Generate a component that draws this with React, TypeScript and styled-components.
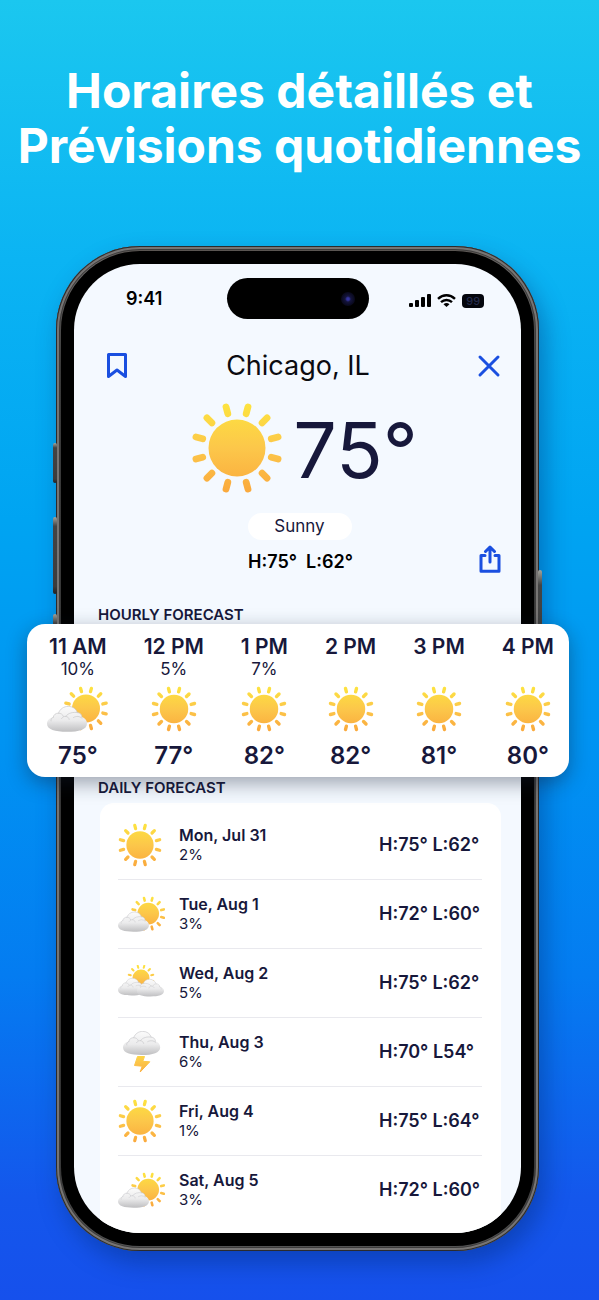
import React, { useId } from "react";
import styled, { createGlobalStyle } from "styled-components";

const navy = "#17183b";
const blue = "#1a4fe0";

const GlobalStyle = createGlobalStyle`
  * { box-sizing: border-box; }
  html, body { margin: 0; min-height: 100%; }
  body {
    background: #1553ec;
    font-family: Inter, "Liberation Sans", sans-serif;
    color: ${navy};
  }
  h1, h2, h3, p, ul, ol { margin: 0; padding: 0; }
  ul, ol { list-style: none; }
`;

const Page = styled.main`
  min-height: 100vh;
  padding: 63px 0 50px;
  background: linear-gradient(180deg, #1bc7ef 0%, #0bb4f3 20%, #00a4f2 40%, #0092f2 58%, #047cf1 75%, #1457ec 92%, #1650ec 100%);
`;

const Headline = styled.h1`
  color: #fff;
  font-size: 48px;
  line-height: 55px;
  font-weight: 700;
  text-align: center;
  white-space: nowrap;
  display: flex;
  flex-direction: column;
  align-items: center;
  margin-bottom: 73px;
`;

const Phone = styled.section`
  position: relative;
  margin: 0 60px 0 56px;
  padding: 5px;
  border-radius: 84px;
  background: linear-gradient(180deg, #55504c, #6b6867 2%, #3a3a3a 12%, #333 90%, #555 100%);
  box-shadow: inset 0 0 0 1px #2b2b2c, inset 0 0 0 3px #777574, inset 0 0 0 4px #3d3c3c,
    6px 12px 24px rgba(0, 40, 110, 0.4);
`;

const SideKey = styled.span<{ $side: "left" | "right"; $top: number; $length: number }>`
  position: absolute;
  ${(p) => p.$side}: -3px;
  top: ${(p) => p.$top}px;
  width: 4px;
  height: ${(p) => p.$length}px;
  border-radius: 2px;
  background: linear-gradient(180deg, #a3a39c, #444 12%, #3c3c3c 90%, #222);
`;

const Bezel = styled.div`
  padding: 13px;
  border-radius: 79px;
  background: #000;
`;

const Screen = styled.div`
  border-radius: 66px;
  background: #f4f9ff;
`;

const StatusBar = styled.div`
  display: grid;
  grid-template-columns: 1fr 142px 1fr;
  align-items: center;
  padding-top: 14px;
  color: #000;
`;

const Clock = styled.time`
  padding-right: 12px;
  font-size: 18px;
  line-height: 20px;
  font-weight: 600;
  text-align: center;
`;

const Island = styled.div`
  display: flex;
  align-items: center;
  justify-content: flex-end;
  height: 41px;
  padding-right: 14px;
  border-radius: 21px;
  background: #000;
`;

const Lens = styled.span`
  width: 14px;
  height: 14px;
  border-radius: 50%;
  background: radial-gradient(circle, #3535a0 0 12%, #14143c 30%, #0b0b22 60%, #040408 100%);
`;

const Indicators = styled.div`
  display: flex;
  align-items: center;
  justify-content: center;
  gap: 6px;
  padding: 4px 0 0 4px;
`;

const Battery = styled.span`
  width: 22px;
  height: 14px;
  border-radius: 4px;
  background: #04060d;
  color: #252c4c;
  font-size: 11px;
  line-height: 14px;
  font-weight: 500;
  text-align: center;
`;

const TitleBar = styled.header`
  display: flex;
  align-items: center;
  justify-content: space-between;
  margin-top: 25px;
  padding: 0 20px 0 33px;
`;

const IconButton = styled.button`
  display: flex;
  padding: 0;
  border: 0;
  background: none;
  color: ${blue};
  cursor: pointer;
`;

const City = styled.h2`
  padding-right: 8px;
  color: #0b0b10;
  font-size: 27px;
  line-height: 44px;
  font-weight: 400;
`;

const Summary = styled.div`
  display: flex;
  flex-direction: column;
  align-items: center;
  gap: 19px;
  padding: 14px 0 0 4px;
`;

const Now = styled.div`
  display: flex;
  align-items: center;
  gap: 10px;
  height: 92px;
  padding-left: 10px;
`;

const NowTemp = styled.p`
  padding-top: 4px;
  font-size: 77px;
  line-height: 92px;
  font-weight: 400;
`;

const Condition = styled.p`
  width: 104px;
  border-radius: 14px;
  background: #fff;
  font-size: 17px;
  line-height: 27px;
  text-align: center;
`;

const RangeRow = styled.div`
  display: grid;
  grid-template-columns: 1fr auto 1fr;
  align-items: center;
  height: 44px;
  margin-bottom: 22px;
  padding: 0 20px;
`;

const TodayRange = styled.p`
  grid-column: 2;
  padding-left: 6px;
  color: #000;
  font-size: 18px;
  line-height: 22px;
  font-weight: 600;
  white-space: pre;
`;

const ShareButton = styled(IconButton)`
  justify-self: end;
  margin-bottom: 6px;
`;

const SectionTitle = styled.h3`
  padding: 0 24px;
  font-size: 15px;
  line-height: 18px;
  font-weight: 600;
`;

const HourlyCard = styled.ol`
  position: relative;
  display: flex;
  justify-content: space-between;
  height: 153px;
  margin: 0 -48px 0 -47px;
  padding: 12px 15px 0 22px;
  border-radius: 18px;
  background: #fff;
  box-shadow: 0 6px 20px rgba(20, 30, 50, 0.4);
`;

const Hour = styled.li`
  display: flex;
  flex-direction: column;
  align-items: center;
`;

const HourName = styled.time`
  font-size: 21px;
  line-height: 22px;
  font-weight: 600;
  white-space: nowrap;
`;

const HourChance = styled.span`
  height: 22px;
  font-size: 17px;
  line-height: 22px;
`;

const HourIcon = styled.span`
  display: flex;
  margin: 6px -6px 10px;
`;

const HourTemp = styled.strong`
  font-size: 24px;
  line-height: 28px;
  font-weight: 600;
`;

const Daily = styled.div`
  overflow: hidden;
  padding-top: 2px;
  border-radius: 0 0 66px 66px;
`;

const DailyPanel = styled.ul`
  margin: 6px 20px 0 26px;
  padding: 7px 19px 9px 18px;
  border-radius: 14px 14px 0 0;
  background: #fff;
`;

const Day = styled.li`
  display: grid;
  grid-template-columns: 61px 1fr 103px;
  align-items: center;
  height: 69px;
  & + & { border-top: 1px solid #e9e9ee; }
`;

const DayName = styled.strong`
  display: block;
  font-size: 16px;
  line-height: 20px;
  font-weight: 600;
`;

const DayChance = styled.span`
  display: block;
  font-size: 15px;
  line-height: 20px;
`;

const DayRange = styled.span`
  font-size: 18px;
  line-height: 22px;
  font-weight: 600;
  white-space: nowrap;
`;

function SunShape({ cx, cy, r, paint }: { cx: number; cy: number; r: number; paint: string }) {
  const unit = r / 28.5;
  return (
    <g stroke={paint} fill={paint}>
      <circle cx={cx} cy={cy} r={r} stroke="none" />
      {Array.from({ length: 12 }, (_, i) => {
        const a = ((i * 30 + 15) * Math.PI) / 180;
        return (
          <line
            key={i}
            x1={cx + Math.cos(a) * 35.5 * unit}
            y1={cy + Math.sin(a) * 35.5 * unit}
            x2={cx + Math.cos(a) * 42.5 * unit}
            y2={cy + Math.sin(a) * 42.5 * unit}
            strokeWidth={6.8 * unit}
            strokeLinecap="round"
          />
        );
      })}
    </g>
  );
}

function SunPaint({ id, top, bottom }: { id: string; top: number; bottom: number }) {
  return (
    <linearGradient id={id} gradientUnits="userSpaceOnUse" x1="0" y1={top} x2="0" y2={bottom}>
      <stop offset="0" stopColor="#fde43f" />
      <stop offset="0.5" stopColor="#fcc74a" />
      <stop offset="1" stopColor="#faa83c" />
    </linearGradient>
  );
}

function Cloud({ paint }: { paint: string }) {
  return (
    <g>
      <path
        d="M20 25.800C8 25.800 0 23.500 0 17.800C0 14.400 2.600 12 6.200 11.300C6.600 8.500 9 7 11.500 7.200C13 2.800 17 .4 21.200 .4C25.800 .4 29.300 3 30.300 6.600C33 6.700 34.800 8.500 35 11C38 12 40 14.400 40 17.400C40 23.500 32 25.800 20 25.800Z"
        fill={paint}
      />
      <path
        d="M6.200 11.300C6.600 8.500 9 7 11.500 7.200C13 2.800 17 .4 21.200 .4C25.800 .4 29.300 3 30.300 6.600C33 6.700 34.800 8.500 35 11M6.200 11.300C4.500 12 3.600 13.400 4 15M11.500 7.200C14 7.200 15.800 8.400 16.400 10.400M14.500 12.600C15.800 10.800 17.300 10.200 19 10.400C20.500 7.200 26.500 5.700 30.300 6.600M26.500 11.500C29.300 9.800 32.600 10.100 35 12.200M19 10.400C21 10.800 22 12 22.200 13.400"
        fill="none"
        stroke="#c8c8ca"
        strokeWidth="0.700"
        strokeLinecap="round"
      />
    </g>
  );
}

function CloudPaint({ id }: { id: string }) {
  return (
    <linearGradient id={id} x1="0" y1="0" x2="0" y2="1">
      <stop offset="0" stopColor="#fbfbfb" />
      <stop offset="0.55" stopColor="#ebebec" />
      <stop offset="1" stopColor="#bfbfc1" />
    </linearGradient>
  );
}

function SunIcon({ size }: { size: number }) {
  const id = useId();
  return (
    <svg width={size} height={size} viewBox="0 0 92 92" role="img" aria-label="Sunny">
      <defs><SunPaint id={id} top={0} bottom={92} /></defs>
      <SunShape cx={46} cy={46} r={28.5} paint={`url(#${id})`} />
    </svg>
  );
}

function PartlyIcon({ width }: { width: number }) {
  const id = useId();
  return (
    <svg width={width} height={Math.round((width * 46) / 62)} viewBox="0 0 62 46" role="img" aria-label="Partly cloudy">
      <defs>
        <SunPaint id={`${id}s`} top={0} bottom={44} />
        <CloudPaint id={`${id}c`} />
      </defs>
      <SunShape cx={39} cy={22.5} r={14} paint={`url(#${id}s)`} />
      <g transform="translate(0 20)"><Cloud paint={`url(#${id}c)`} /></g>
    </svg>
  );
}

function MostlyCloudyIcon() {
  const id = useId();
  return (
    <svg width="46" height="36" viewBox="0 0 46 36" role="img" aria-label="Mostly cloudy">
      <defs>
        <SunPaint id={`${id}s`} top={0} bottom={24} />
        <CloudPaint id={`${id}c`} />
      </defs>
      <SunShape cx={23} cy={13} r={8.5} paint={`url(#${id}s)`} />
      <g transform="translate(0 13) scale(.68)"><Cloud paint={`url(#${id}c)`} /></g>
      <g transform="translate(46 14) scale(-.68 .68)"><Cloud paint={`url(#${id}c)`} /></g>
    </svg>
  );
}

function StormIcon() {
  const id = useId();
  return (
    <svg width="46" height="42" viewBox="0 0 46 42" role="img" aria-label="Thunderstorm">
      <defs>
        <SunPaint id={`${id}s`} top={18} bottom={44} />
        <CloudPaint id={`${id}c`} />
      </defs>
      <g transform="translate(5 0) scale(.93)"><Cloud paint={`url(#${id}c)`} /></g>
      <path d="M19.500 25.500H26.500L24.800 30.300L31.800 30.800L22.200 41L24.200 35.200L16.500 34.500Z" fill={`url(#${id}s)`} stroke={`url(#${id}s)`} strokeWidth="1" strokeLinejoin="round" />
    </svg>
  );
}

type Weather = "sun" | "partly" | "mostly" | "storm";

function DayIcon({ kind }: { kind: Weather }) {
  if (kind === "partly") return <PartlyIcon width={48} />;
  if (kind === "mostly") return <MostlyCloudyIcon />;
  if (kind === "storm") return <StormIcon />;
  return <SunIcon size={44} />;
}

const hours: { time: string; chance: string; temp: string; kind: Weather }[] = [
  { time: "11 AM", chance: "10%", temp: "75°", kind: "partly" },
  { time: "12 PM", chance: "5%", temp: "77°", kind: "sun" },
  { time: "1 PM", chance: "7%", temp: "82°", kind: "sun" },
  { time: "2 PM", chance: "", temp: "82°", kind: "sun" },
  { time: "3 PM", chance: "", temp: "81°", kind: "sun" },
  { time: "4 PM", chance: "", temp: "80°", kind: "sun" },
];

const days: { name: string; chance: string; range: string; kind: Weather }[] = [
  { name: "Mon, Jul 31", chance: "2%", range: "H:75° L:62°", kind: "sun" },
  { name: "Tue, Aug 1", chance: "3%", range: "H:72° L:60°", kind: "partly" },
  { name: "Wed, Aug 2", chance: "5%", range: "H:75° L:62°", kind: "mostly" },
  { name: "Thu, Aug 3", chance: "6%", range: "H:70° L54°", kind: "storm" },
  { name: "Fri, Aug 4", chance: "1%", range: "H:75° L:64°", kind: "sun" },
  { name: "Sat, Aug 5", chance: "3%", range: "H:72° L:60°", kind: "partly" },
];

export default function App() {
  return (
    <Page>
      <GlobalStyle />
      <Headline>
        <span>Horaires détaillés et</span>
        <span>Prévisions quotidiennes</span>
      </Headline>
      <Phone>
        <SideKey $side="left" $top={197} $length={40} />
        <SideKey $side="left" $top={271} $length={77} />
        <SideKey $side="left" $top={368} $length={77} />
        <SideKey $side="right" $top={324} $length={126} />
        <Bezel>
          <Screen>
            <StatusBar>
              <Clock>9:41</Clock>
              <Island><Lens /></Island>
              <Indicators>
                <svg width="22" height="13" viewBox="0 0 22 13" aria-hidden="true">
                  <rect x="0" y="9" width="4" height="4" rx="1" />
                  <rect x="6" y="6" width="4" height="7" rx="1" />
                  <rect x="12" y="3" width="4" height="10" rx="1" />
                  <rect x="18" y="0" width="4" height="13" rx="1" />
                </svg>
                <svg width="19" height="13" viewBox="0 0 19 13" fill="none" stroke="#000" strokeWidth="2.400" aria-hidden="true">
                  <path d="M1 4.800C6 0 13 0 18 4.800" />
                  <path d="M4 8.200C7.200 5.200 11.800 5.200 15 8.200" />
                  <path d="M6.500 10.200C8.400 8.700 10.600 8.700 12.500 10.200L9.500 13Z" fill="#000" stroke="none" />
                </svg>
                <Battery>99</Battery>
              </Indicators>
            </StatusBar>
            <TitleBar>
              <IconButton aria-label="Save location">
                <svg width="20" height="26" viewBox="0 0 20 26" fill="none" stroke="currentColor" strokeWidth="3" strokeLinejoin="round">
                  <path d="M1.500 1.500H18.500V23.500L10 17L1.500 23.500Z" />
                </svg>
              </IconButton>
              <City>Chicago, IL</City>
              <IconButton aria-label="Close">
                <svg width="24" height="24" viewBox="0 0 24 24" fill="none" stroke="currentColor" strokeWidth="3" strokeLinecap="round">
                  <path d="M3 3L21 21M21 3L3 21" />
                </svg>
              </IconButton>
            </TitleBar>
            <Summary>
              <Now>
                <SunIcon size={92} />
                <NowTemp>75°</NowTemp>
              </Now>
              <Condition>Sunny</Condition>
            </Summary>
            <RangeRow>
              <TodayRange>{"H:75°  L:62°"}</TodayRange>
              <ShareButton aria-label="Share">
                <svg width="22" height="28" viewBox="0 0 22 28" fill="none" stroke="currentColor" strokeWidth="3" strokeLinejoin="round" strokeLinecap="round">
                  <path d="M6 10.500H2V26.300H20V10.500H16M11 17V2.500M6.500 6.500L11 2L15.500 6.500" />
                </svg>
              </ShareButton>
            </RangeRow>
            <SectionTitle>HOURLY FORECAST</SectionTitle>
            <HourlyCard>
              {hours.map((h) => (
                <Hour key={h.time}>
                  <HourName>{h.time}</HourName>
                  <HourChance>{h.chance}</HourChance>
                  <HourIcon>{h.kind === "partly" ? <PartlyIcon width={62} /> : <SunIcon size={46} />}</HourIcon>
                  <HourTemp>{h.temp}</HourTemp>
                </Hour>
              ))}
            </HourlyCard>
            <Daily>
              <SectionTitle>DAILY FORECAST</SectionTitle>
              <DailyPanel>
                {days.map((d) => (
                  <Day key={d.name}>
                    <DayIcon kind={d.kind} />
                    <div>
                      <DayName>{d.name}</DayName>
                      <DayChance>{d.chance}</DayChance>
                    </div>
                    <DayRange>{d.range}</DayRange>
                  </Day>
                ))}
              </DailyPanel>
            </Daily>
          </Screen>
        </Bezel>
      </Phone>
    </Page>
  );
}
